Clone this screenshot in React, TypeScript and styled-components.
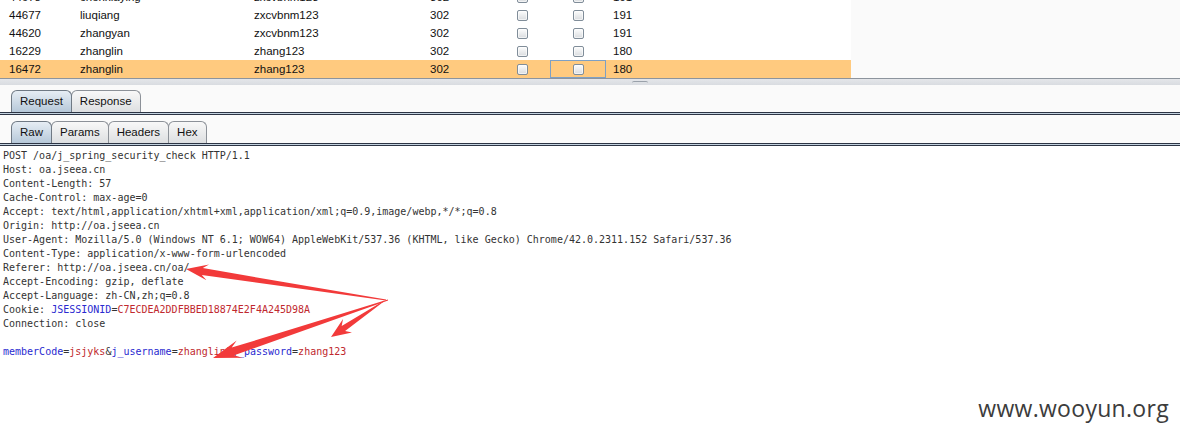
import React from "react";
import styled, { createGlobalStyle } from "styled-components";

const Global = createGlobalStyle`
  html, body { margin: 0; padding: 0; background: #fafafa; }
  #root { width: 1180px; height: 440px; }
`;

const Page = styled.div`
  position: relative;
  width: 1180px;
  height: 440px;
  overflow: hidden;
  display: flex;
  flex-direction: column;
  background: #fafafa;
`;

const TableViewport = styled.div`
  height: 78px;
  display: flex;
  background: #fafafa;
  flex-shrink: 0;
`;

const TableBody = styled.div`
  width: 851px;
  background: #ffffff;
  display: flex;
  flex-direction: column;
  justify-content: flex-end;
  overflow: hidden;
`;

const Row = styled.div<{ $selected?: boolean }>`
  flex-shrink: 0;
  height: 18px;
  display: grid;
  grid-template-columns: 72px 175px 176px 71px 56px 56px 245px;
  align-items: stretch;
  background: ${(p) => (p.$selected ? "#ffca7f" : "transparent")};
  font-family: "Liberation Sans", Arial, sans-serif;
  font-size: 11.5px;
  color: #111;
`;

const Cell = styled.div<{ $pad?: number; $center?: boolean; $focus?: boolean }>`
  box-sizing: border-box;
  display: flex;
  align-items: center;
  justify-content: ${(p) => (p.$center ? "center" : "flex-start")};
  padding-left: ${(p) => (p.$center ? 0 : p.$pad ?? 6)}px;
  border: 1px solid ${(p) => (p.$focus ? "#7ea0c4" : "transparent")};
  white-space: nowrap;
`;

const Check = styled.span`
  box-sizing: border-box;
  width: 11px;
  height: 11px;
  border: 1px solid #808d99;
  border-radius: 2px;
  background: linear-gradient(#fdfdfd, #d9dcdf);
  box-shadow: inset 0 0 0 1px rgba(255, 255, 255, 0.6);
`;

const SplitLine = styled.div`
  height: 1px;
  background: #8d949d;
  flex-shrink: 0;
`;

const SplitBar = styled.div`
  height: 6px;
  background: linear-gradient(#e4e6ea, #d9dce1);
  display: flex;
  align-items: center;
  padding-left: 632px;
  flex-shrink: 0;
`;

const Handle = styled.div`
  width: 16px;
  height: 2px;
  border-top: 1px solid #9aa1aa;
  border-radius: 2px 2px 0 0;
`;

const TabArea = styled.div<{ $top: number }>`
  padding-top: ${(p) => p.$top}px;
  flex-shrink: 0;
`;

const TabStrip = styled.div`
  display: flex;
  align-items: flex-end;
  padding-left: 11px;
`;

const Tab = styled.div<{ $active?: boolean }>`
  box-sizing: border-box;
  height: 22px;
  line-height: 21px;
  padding: 0 8px;
  margin-right: -1px;
  border: 1px solid ${(p) => (p.$active ? "#6f7984" : "#8c9198")};
  border-bottom: none;
  border-radius: 6px 6px 0 0;
  background: ${(p) =>
    p.$active
      ? "linear-gradient(#e6edf4, #b6c8d9)"
      : "linear-gradient(#f8f8f8, #dddfe1)"};
  font-family: "Liberation Sans", Arial, sans-serif;
  font-size: 11.5px;
  color: #111;
  position: relative;
  z-index: ${(p) => (p.$active ? 1 : 0)};
`;

const TabRule = styled.div`
  height: 1px;
  border-top: 1px solid #2c3444;
  border-bottom: 1px solid #2c3444;
  background: #c3d2df;
`;

const Editor = styled.div`
  flex: 1;
  background: #ffffff;
  padding: 3px 0 0 3px;
  font-family: "DejaVu Sans Mono", "Liberation Mono", monospace;
  font-size: 10px;
  line-height: 14px;
  color: #333333;
  white-space: pre;
`;

const Line = styled.div`
  height: 14px;
`;

const Name = styled.span`
  color: #2a2ad0;
`;

const Value = styled.span`
  color: #c0282e;
`;

const Watermark = styled.div`
  position: absolute;
  right: 11px;
  top: 392px;
  font-family: "Open Sans", "Noto Sans", sans-serif;
  font-size: 23px;
  color: #3c3c3c;
  letter-spacing: 0.3px;
`;

const Overlay = styled.svg`
  position: absolute;
  left: 0;
  top: 0;
  pointer-events: none;
`;

type RowData = [string, string, string, string, string];

const rows: RowData[] = [
  ["44678", "chenxiaying", "zxcvbnm123", "302", "191"],
  ["44677", "liuqiang", "zxcvbnm123", "302", "191"],
  ["44620", "zhangyan", "zxcvbnm123", "302", "191"],
  ["16229", "zhanglin", "zhang123", "302", "180"],
  ["16472", "zhanglin", "zhang123", "302", "180"],
];

function arrowPoints(
  ox: number,
  oy: number,
  tx: number,
  ty: number,
  headLen: number,
  headW: number,
  shaftW: number
) {
  const dx = tx - ox;
  const dy = ty - oy;
  const len = Math.hypot(dx, dy);
  const ux = dx / len;
  const uy = dy / len;
  const nx = -uy;
  const ny = ux;
  const bx = tx - ux * headLen;
  const by = ty - uy * headLen;
  const nb = headLen * 0.25;
  const cx = tx - ux * (headLen - nb);
  const cy = ty - uy * (headLen - nb);
  const pts: [number, number][] = [
    [ox + nx * 0.4, oy + ny * 0.4],
    [cx + nx * shaftW, cy + ny * shaftW],
    [bx + nx * headW, by + ny * headW],
    [tx, ty],
    [bx - nx * headW, by - ny * headW],
    [cx - nx * shaftW, cy - ny * shaftW],
    [ox - nx * 0.4, oy - ny * 0.4],
  ];
  return pts.map((p) => `${p[0].toFixed(1)},${p[1].toFixed(1)}`).join(" ");
}

const Arrows = () => (
  <Overlay width={1180} height={440} viewBox="0 0 1180 440">
    <g fill="#f23a3a">
      <polygon points={arrowPoints(386, 300, 186, 269, 22, 8, 3.5)} />
      <polygon points={arrowPoints(384, 301, 331, 337, 20, 8, 3)} />
      <polygon points={arrowPoints(388, 300, 213, 358, 28, 9, 4)} />
    </g>
  </Overlay>
);

export default function App() {
  return (
    <>
      <Global />
      <Page>
        <TableViewport>
          <TableBody>
            {rows.map((r, i) => {
              const selected = i === rows.length - 1;
              return (
                <Row key={i} $selected={selected}>
                  <Cell $pad={8}>{r[0]}</Cell>
                  <Cell $pad={7}>{r[1]}</Cell>
                  <Cell>{r[2]}</Cell>
                  <Cell>{r[3]}</Cell>
                  <Cell $center>
                    <Check />
                  </Cell>
                  <Cell $center $focus={selected}>
                    <Check />
                  </Cell>
                  <Cell>{r[4]}</Cell>
                </Row>
              );
            })}
          </TableBody>
        </TableViewport>
        <SplitLine />
        <SplitBar>
          <Handle />
        </SplitBar>
        <TabArea $top={5}>
          <TabStrip>
            <Tab $active>Request</Tab>
            <Tab>Response</Tab>
          </TabStrip>
          <TabRule />
        </TabArea>
        <TabArea $top={6}>
          <TabStrip>
            <Tab $active>Raw</Tab>
            <Tab>Params</Tab>
            <Tab>Headers</Tab>
            <Tab>Hex</Tab>
          </TabStrip>
          <TabRule />
        </TabArea>
        <Editor>
          <Line>POST /oa/j_spring_security_check HTTP/1.1</Line>
          <Line>Host: oa.jseea.cn</Line>
          <Line>Content-Length: 57</Line>
          <Line>Cache-Control: max-age=0</Line>
          <Line>Accept: text/html,application/xhtml+xml,application/xml;q=0.9,image/webp,*/*;q=0.8</Line>
          <Line>Origin: http://oa.jseea.cn</Line>
          <Line>User-Agent: Mozilla/5.0 (Windows NT 6.1; WOW64) AppleWebKit/537.36 (KHTML, like Gecko) Chrome/42.0.2311.152 Safari/537.36</Line>
          <Line>Content-Type: application/x-www-form-urlencoded</Line>
          <Line>Referer: http://oa.jseea.cn/oa/</Line>
          <Line>Accept-Encoding: gzip, deflate</Line>
          <Line>Accept-Language: zh-CN,zh;q=0.8</Line>
          <Line>
            Cookie: <Name>JSESSIONID</Name>=<Value>C7ECDEA2DDFBBED18874E2F4A245D98A</Value>
          </Line>
          <Line>Connection: close</Line>
          <Line> </Line>
          <Line>
            <Name>memberCode</Name>=<Value>jsjyks</Value>&amp;<Name>j_username</Name>=
            <Value>zhanglin</Value>&amp;<Name>j_password</Name>=<Value>zhang123</Value>
          </Line>
        </Editor>
        <Watermark>www.wooyun.org</Watermark>
        <Arrows />
      </Page>
    </>
  );
}
